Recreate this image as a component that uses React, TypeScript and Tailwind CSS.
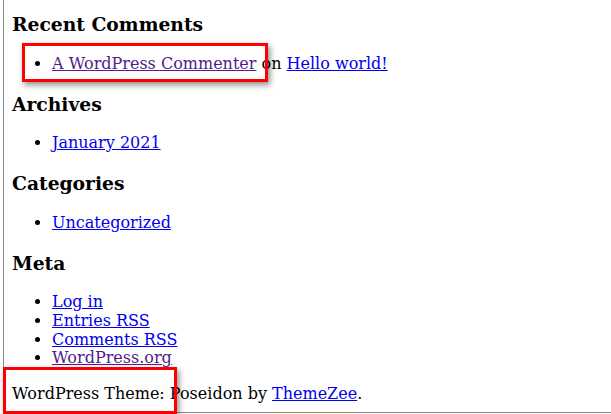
export default function App() {
  const visited = "text-[#551a8b] underline";
  const link = "text-[#0000ee] underline";
  const heading = "text-[18.72px] font-bold leading-[22px]";
  return (
    <div className="relative h-[414px] w-[611px] overflow-hidden bg-white font-['DejaVu_Serif',serif] text-[16px] leading-[18.6px] text-black">
      <div className="ml-[3px] h-[413px] border-b border-l border-[#8a8a8a] pl-[8px]">
        <section>
          <h2 className={`pt-[13.2px] ${heading}`}>Recent Comments</h2>
          <ul className="mt-[19.45px] list-disc pl-10">
            <li>
              <a className={visited}>A WordPress Commenter</a> on <a className={link}>Hello world!</a>
            </li>
          </ul>
        </section>
        <section>
          <h2 className={`mt-[19.55px] ${heading}`}>Archives</h2>
          <ul className="mt-[19.45px] list-disc pl-10">
            <li>
              <a className={link}>January 2021</a>
            </li>
          </ul>
        </section>
        <section>
          <h2 className={`mt-[19.55px] ${heading}`}>Categories</h2>
          <ul className="mt-[19.45px] list-disc pl-10">
            <li>
              <a className={link}>Uncategorized</a>
            </li>
          </ul>
        </section>
        <section>
          <h2 className={`mt-[19.55px] ${heading}`}>Meta</h2>
          <ul className="mt-[19.45px] list-disc pl-10">
            <li>
              <a className={link}>Log in</a>
            </li>
            <li>
              <a className={link}>Entries RSS</a>
            </li>
            <li>
              <a className={link}>Comments RSS</a>
            </li>
            <li>
              <a className={visited}>WordPress.org</a>
            </li>
          </ul>
        </section>
        <footer className="mt-[17.4px]">
          WordPress Theme: Poseidon by <a className={link}>ThemeZee</a>.
        </footer>
      </div>
      <div className="absolute left-[22px] top-[43px] h-[39px] w-[246px] border-[3px] border-[#ff0000] shadow-[2px_3px_6px_rgba(0,0,0,0.45)]" />
      <div className="absolute left-[3px] top-[367px] h-[47px] w-[174px] border-[3px] border-[#ff0000] shadow-[2px_3px_6px_rgba(0,0,0,0.45)]" />
    </div>
  );
}
